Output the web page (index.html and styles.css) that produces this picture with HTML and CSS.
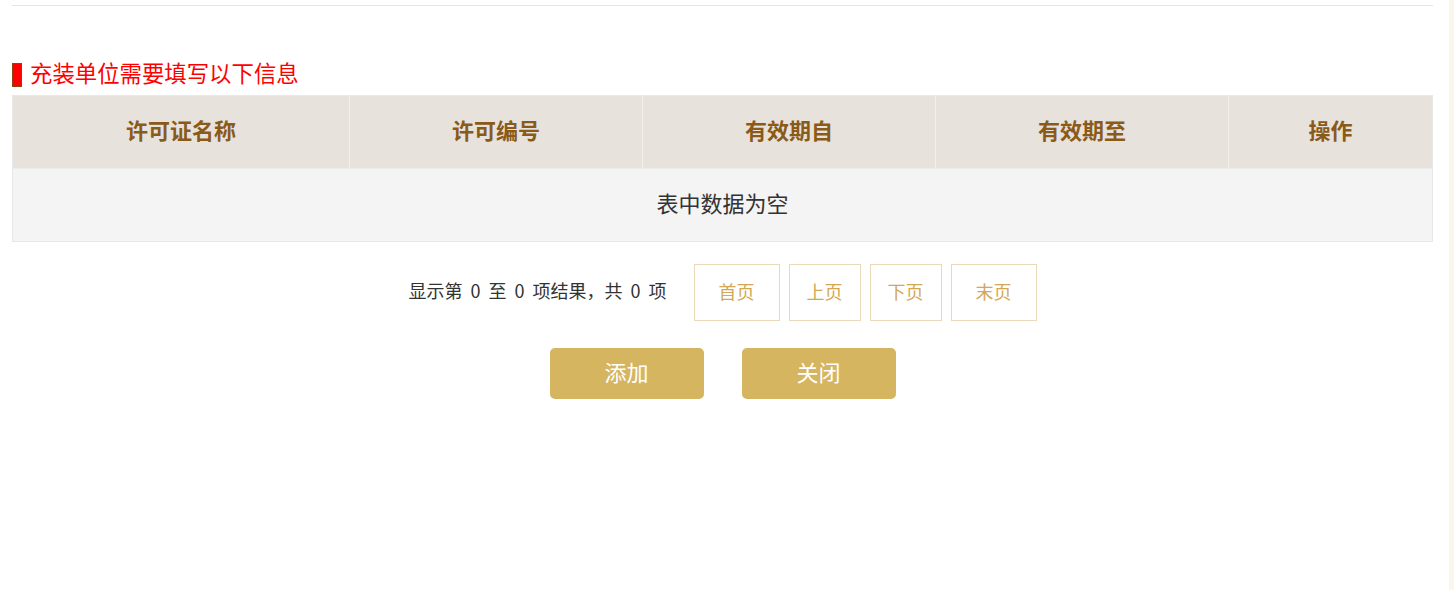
FILE: index.html
```html
<!DOCTYPE html>
<html lang="zh-CN">
<head>
<meta charset="utf-8">
<title>充装单位</title>
<link rel="stylesheet" href="styles.css">
</head>
<body>
<div class="side-strip"></div>
<div class="page">
  <div class="top-line"></div>
  <h2 class="section-title"><span class="marker"></span><span class="title-text">充装单位需要填写以下信息</span></h2>
  <div class="table">
    <div class="row head">
      <div class="cell c1">许可证名称</div>
      <div class="cell c2">许可编号</div>
      <div class="cell c3">有效期自</div>
      <div class="cell c4">有效期至</div>
      <div class="cell c5">操作</div>
    </div>
    <div class="row empty">表中数据为空</div>
  </div>
  <div class="pager">
    <span class="info">显示第 0 至 0 项结果，共 0 项</span>
    <div class="pages">
      <span class="pbtn wide">首页</span>
      <span class="pbtn">上页</span>
      <span class="pbtn">下页</span>
      <span class="pbtn wide">末页</span>
    </div>
  </div>
  <div class="actions">
    <button class="btn">添加</button>
    <button class="btn">关闭</button>
  </div>
</div>
</body>
</html>
```
FILE: styles.css
```css
html, body {
  margin: 0;
  padding: 0;
  background: #fff;
  font-family: "Noto Sans CJK SC", "Noto Sans", sans-serif;
}
body {
  position: relative;
  height: 590px;
  overflow: hidden;
}
.side-strip {
  position: absolute;
  right: 0;
  top: 0;
  width: 5px;
  height: 100%;
  background: #faf6ec;
}
.page {
  margin-left: 12px;
  width: 1421px;
  padding-top: 5px;
}
.top-line {
  height: 1px;
  background: #e5e5e5;
}
.section-title {
  margin: 53px 0 0 0;
  display: flex;
  align-items: flex-start;
  height: 26px;
  font-weight: normal;
}
.title-text {
  font-size: 22.4px;
  line-height: 26px;
  color: #ff0000;
}
.marker {
  display: inline-block;
  width: 8px;
  height: 22px;
  background: #ff0000;
  border: 1px solid #8b4513;
  margin-right: 8px;
  margin-top: 4px;
}
.table {
  margin-top: 10px;
  border: 1px solid #e8e8e8;
}
.row {
  display: flex;
  height: 72px;
}
.head {
  background: #e8e2dc;
}
.cell {
  display: flex;
  align-items: center;
  justify-content: center;
  padding-bottom: 6px;
  box-sizing: border-box;
  font-size: 22px;
  font-weight: bold;
  color: #8a5a18;
  border-left: 1px solid #f3efea;
}
.c1 { width: 336px; border-left: none; }
.c2 { width: 293px; }
.c3 { width: 293px; }
.c4 { width: 293px; }
.c5 { flex: 1; }
.row.empty {
  height: 73px;
  background: #f4f4f4;
  border-top: 1px solid #ececec;
  align-items: center;
  justify-content: center;
  box-sizing: border-box;
  padding-bottom: 6px;
  font-size: 22px;
  color: #333;
}
.pager {
  margin-top: 22px;
  display: flex;
  justify-content: center;
  align-items: center;
  gap: 27px;
}
.info {
  font-size: 18px;
  color: #333;
  word-spacing: 4px;
  padding-bottom: 5px;
}
.pages {
  display: flex;
  gap: 9px;
}
.pbtn {
  display: flex;
  align-items: center;
  justify-content: center;
  height: 52px;
  box-sizing: content-box;
  padding: 0 17px 3px;
  border: 1px solid #ead9b8;
  font-size: 18px;
  color: #d3a753;
}
.pbtn.wide {
  padding: 0 24px 3px;
}
.actions {
  margin-top: 27px;
  display: flex;
  justify-content: center;
  gap: 38px;
}
.btn {
  width: 154px;
  height: 51px;
  border: none;
  border-radius: 5px;
  background: #d5b560;
  color: #fff;
  font-family: "Noto Sans CJK SC", "Noto Sans", sans-serif;
  font-size: 22px;
  padding: 0 0 5px 0;
}
```
